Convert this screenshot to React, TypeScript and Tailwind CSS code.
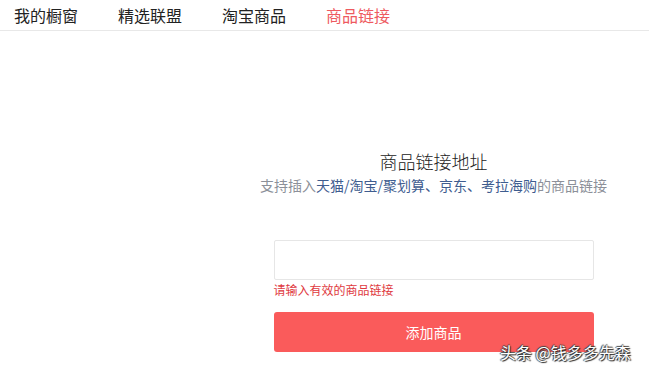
import React from "react";

export default function App() {
  return (
    <div
      className="w-[649px] h-[372px] bg-white relative overflow-hidden"
      style={{ fontFamily: '"Noto Sans CJK SC", "Noto Sans", sans-serif' }}
    >
      <div className="h-[31px] border-b border-[#e8e8e8] flex items-center pl-[14px] gap-[40px] text-[16px] text-[#222]">
        <span className="leading-[30px]">我的橱窗</span>
        <span className="leading-[30px]">精选联盟</span>
        <span className="leading-[30px]">淘宝商品</span>
        <span className="leading-[30px] text-[#ee5a5f]">商品链接</span>
      </div>
      <div className="flex">
        <div className="w-[218px] shrink-0" />
        <div className="flex-1 flex flex-col items-center pt-[118px]">
          <div className="text-[18px] leading-[24px] text-[#222] font-light">商品链接地址</div>
          <div className="text-[14px] leading-[20px] mt-[2px] text-[#8c9099]">
            支持插入<span className="text-[#3e5c8f]">天猫/淘宝/聚划算、京东、考拉海购</span>的商品链接
          </div>
          <div className="w-[320px] mt-[45px]">
            <div className="h-[40px] border border-[#e6e6e6] rounded-[2px] bg-white" />
            <div className="text-[12px] leading-[16px] mt-[2px] text-[#e0393e]">请输入有效的商品链接</div>
            <div className="h-[40px] mt-[14px] bg-[#fa5b5b] rounded-[3px] flex items-center justify-center text-white text-[14px]">
              添加商品
            </div>
          </div>
        </div>
      </div>
      <div
        className="absolute left-[500px] top-[341px] text-[16px] leading-[22px] text-white"
        style={{ textShadow: "1px 1px 1px #222, -1px 0 1px #444, 0 -1px 1px #444" }}
      >
        头条 @钱多多先森
      </div>
    </div>
  );
}
